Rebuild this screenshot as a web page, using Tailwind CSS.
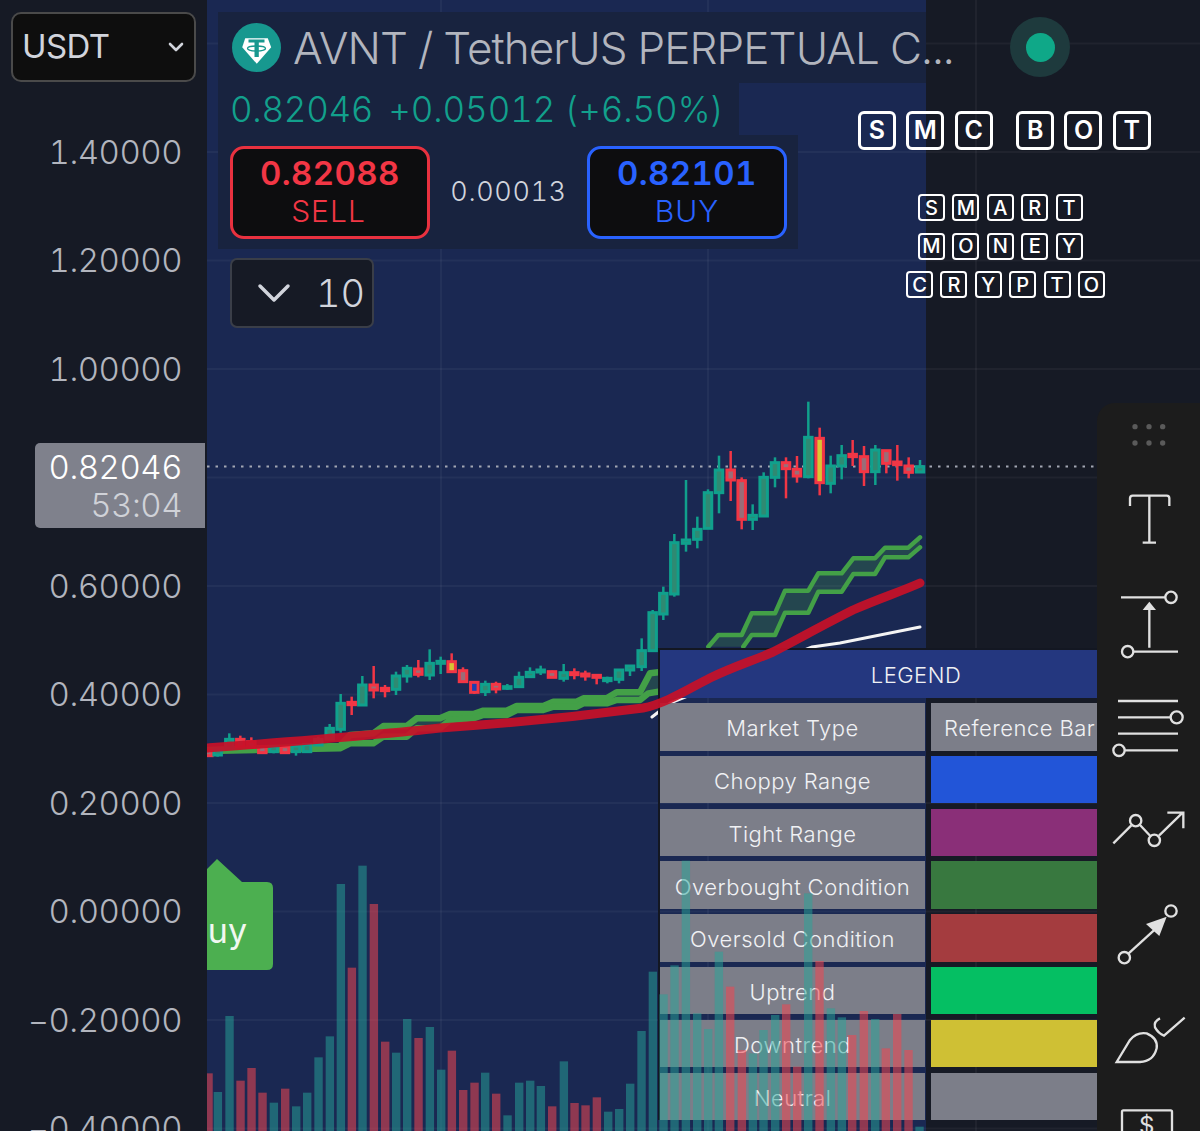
<!DOCTYPE html>
<html lang="en">
<head>
  <meta charset="UTF-8" />
  <title>AVNT / TetherUS Perpetual Chart</title>
  <script src="https://cdn.jsdelivr.net/npm/@tailwindcss/browser@4"></script>
</head>
<body class="bg-[#161a25]">
<div class="relative flex w-[1200px] h-[1131px] overflow-hidden tabular-nums font-['Inter','Liberation_Sans',sans-serif]">

  <!-- Price axis -->
  <aside class="relative z-30 w-[207px] h-full shrink-0 bg-[#161a25] text-[33px] font-light text-[#b2b5be] tracking-[-0.5px]">
    <div class="absolute left-[11px] top-[12px] w-[185px] h-[70px] flex items-center justify-between pl-[9px] pr-[10px] bg-[#0e0e0e] border-2 border-[#4a4a4a] rounded-[10px] text-[#d1d4dc] font-normal">
      <span class="tracking-[-0.6px]">USDT</span>
      <svg width="16" height="10" viewBox="0 0 16 10" fill="none" stroke="#d1d4dc" stroke-width="2.600" stroke-linecap="round" stroke-linejoin="round"><path d="M2 2l6 6 6-6"/></svg>
    </div>
    <div class="pt-[98px] flex flex-col items-end pr-[25px]">
      <div class="h-[108.5px] flex items-center">1.40000</div>
      <div class="h-[108.5px] flex items-center">1.20000</div>
      <div class="h-[108.5px] flex items-center">1.00000</div>
      <div class="h-[108.5px] flex items-center"></div>
      <div class="h-[108.5px] flex items-center">0.60000</div>
      <div class="h-[108.5px] flex items-center">0.40000</div>
      <div class="h-[108.5px] flex items-center">0.20000</div>
      <div class="h-[108.5px] flex items-center">0.00000</div>
      <div class="h-[108.5px] flex items-center">−0.20000</div>
      <div class="h-[108.5px] flex items-center">−0.40000</div>
    </div>
    <div class="absolute left-[35px] top-[443px] w-[170px] h-[85px] flex flex-col items-end justify-center pr-[23px] bg-[#7f818c] rounded-l-[5px] leading-[38px]">
      <span class="text-white">0.82046</span>
      <span class="text-[#d0d2d8]">53:04</span>
    </div>
  </aside>

  <!-- Chart -->
  <main class="relative flex-1 flex">
    <section class="relative w-[719px] h-full bg-[#1a2852]">
      <div class="relative z-[5] mt-[12px] ml-[11px]">
        <div class="w-[708px] h-[71px] bg-[#18233f] flex items-center pl-[14px]">
          <svg width="49" height="49" viewBox="0 0 49 49" class="shrink-0">
            <circle cx="24.500" cy="24.500" r="24.500" fill="#17988f"/>
            <path d="M13.200 15.200H35.800L39.200 24.200L24.800 40.800L10.200 24.200z" fill="#fff"/>
            <path d="M16.500 16.500H32.500V19.500H26.800V34H22.500V19.500H16.500z" fill="#17988f"/>
            <ellipse cx="24.500" cy="25.500" rx="9" ry="2.500" fill="none" stroke="#17988f" stroke-width="1.300"/>
          </svg>
          <h1 class="ml-[12px] text-[44px] font-light tracking-[-0.9px] text-[#b2b5be] whitespace-nowrap">AVNT / TetherUS PERPETUAL C...</h1>
        </div>
        <div class="w-[521px] h-[52px] bg-[#18233f] flex items-center pl-[12px] text-[35px] font-light text-[#12a08c] whitespace-nowrap gap-[15px]">
          <span class="tracking-[-0.3px]">0.82046</span>
          <span class="tracking-[-0.1px]">+0.05012 (+6.50%)</span>
        </div>
        <div class="w-[580px] h-[114px] bg-[#18233f] flex pl-[12px] pt-[11px]">
          <button class="w-[200px] h-[93px] flex flex-col items-center justify-center pb-[3px] bg-[#0d0d0f] border-[3px] border-[#e8313f] rounded-[14px] text-[#f23645]">
            <span class="text-[33px] font-semibold leading-[39px] tracking-[0.4px]">0.82088</span>
            <span class="text-[30px] font-light leading-[36px] tracking-[1px] -ml-[3px]">SELL</span>
          </button>
          <span class="w-[157px] h-[93px] flex items-center justify-center text-[27px] font-light tracking-[0.6px] text-[#d1d4dc]">0.00013</span>
          <button class="w-[200px] h-[93px] flex flex-col items-center justify-center pb-[3px] bg-[#0d0d0f] border-[3px] border-[#2962ff] rounded-[14px] text-[#2962ff]">
            <span class="text-[33px] font-semibold leading-[39px] tracking-[0.4px]">0.82101</span>
            <span class="text-[30px] font-light leading-[36px] tracking-[1px]">BUY</span>
          </button>
        </div>
        <div class="mt-[9px] ml-[12px] w-[144px] h-[70px] flex items-center gap-[25px] pl-[25px] bg-[#161a25] border-2 border-[#3a3e48] rounded-[7px]">
          <svg width="34" height="20" viewBox="0 0 34 20" fill="none" stroke="#d1d4dc" stroke-width="3.500" stroke-linecap="round" stroke-linejoin="round"><path d="M3 3l14 14 14-14"/></svg>
          <span class="text-[38px] font-light text-[#d1d4dc]">10</span>
        </div>
      </div>

      <!-- Buy flag, cut by the axis -->
      <div class="absolute left-0 top-[859px] w-[66px] h-[111px] z-[6] overflow-hidden">
        <svg width="66" height="111" viewBox="0 0 66 111" class="absolute inset-0">
          <path d="M0 10L10 0L35 23H60q6 0 6 6v76q0 6-6 6H0z" fill="#4caf50"/>
        </svg>
        <span class="absolute right-[26px] top-[52px] text-[34px] leading-[40px] text-[#f1f8f1]">Buy</span>
      </div>
    </section>

    <!-- Grid, candles, moving averages under the legend -->
    <svg id="under" class="absolute inset-0 z-[1]" width="993" height="1131" viewBox="207 0 993 1131" fill="none"></svg>

    <!-- Legend -->
    <div class="absolute left-[451px] top-[648px] z-10 w-[514px] border-l-2 border-t-2 border-[#131722] text-[22px] font-light tracking-[0.5px] text-[#f0f1f4]">
      <div class="h-[48px] mb-[5px] pt-[3px] flex items-center justify-center bg-[#24377f]">LEGEND</div>
      <div class="grid grid-cols-[265px_1fr] gap-x-[6px] gap-y-[5.300px] auto-rows-[47.500px]">
        <div class="flex items-center justify-center pt-[4px] bg-[#7c7e89]">Market Type</div>
        <div class="flex items-center pl-[13px] pt-[4px] bg-[#7c7e89] whitespace-nowrap">Reference Bar</div>
        <div class="flex items-center justify-center pt-[4px] bg-[#7c7e89]">Choppy Range</div>
        <div class="bg-[#2255d8]"></div>
        <div class="flex items-center justify-center pt-[4px] bg-[#7c7e89]">Tight Range</div>
        <div class="bg-[#8a2f78]"></div>
        <div class="flex items-center justify-center pt-[4px] bg-[#7c7e89]">Overbought Condition</div>
        <div class="bg-[#38783f]"></div>
        <div class="flex items-center justify-center pt-[4px] bg-[#7c7e89]">Oversold Condition</div>
        <div class="bg-[#a43c3f]"></div>
        <div class="flex items-center justify-center pt-[4px] bg-[#7c7e89]">Uptrend</div>
        <div class="bg-[#05bf63]"></div>
        <div class="flex items-center justify-center pt-[4px] bg-[#7c7e89]">Downtrend</div>
        <div class="bg-[#cfc034]"></div>
        <div class="flex items-center justify-center pt-[4px] bg-[#7c7e89]">Neutral</div>
        <div class="bg-[#7c7e89]"></div>
      </div>
    </div>

    <!-- Red average and volume bars sit over the legend -->
    <svg id="over" class="absolute inset-0 z-20 pointer-events-none" width="993" height="1131" viewBox="207 0 993 1131" fill="none"></svg>

    <!-- Status dot -->
    <div class="absolute left-[803px] top-[17px] z-[5] w-[60px] h-[60px] flex items-center justify-center rounded-full bg-[#1e3a3d]">
      <div class="w-[29px] h-[29px] rounded-full bg-[#0fa888]"></div>
    </div>

    <!-- Boxed captions -->
    <div class="absolute left-[651px] top-[111px] z-[5] flex gap-[10.300px] text-[25px] font-semibold text-white">
      <span class="w-[38px] h-[39px] flex items-center justify-center border-[3px] border-white rounded-[6px]">S</span>
      <span class="w-[38px] h-[39px] flex items-center justify-center border-[3px] border-white rounded-[6px]">M</span>
      <span class="w-[38px] h-[39px] flex items-center justify-center border-[3px] border-white rounded-[6px]">C</span>
      <span class="w-[13px]"></span>
      <span class="w-[38px] h-[39px] flex items-center justify-center border-[3px] border-white rounded-[6px] -ml-[10px]">B</span>
      <span class="w-[38px] h-[39px] flex items-center justify-center border-[3px] border-white rounded-[6px]">O</span>
      <span class="w-[38px] h-[39px] flex items-center justify-center border-[3px] border-white rounded-[6px]">T</span>
    </div>
    <div class="absolute left-[699px] top-[194px] w-[198px] z-[5] flex flex-col items-start gap-[11.500px] text-[20px] font-medium text-white">
      <div class="flex gap-[7.400px] ml-[12px]">
        <span class="w-[27px] h-[27px] flex items-center justify-center border-[2.500px] border-white rounded-[4px]">S</span>
        <span class="w-[27px] h-[27px] flex items-center justify-center border-[2.500px] border-white rounded-[4px]">M</span>
        <span class="w-[27px] h-[27px] flex items-center justify-center border-[2.500px] border-white rounded-[4px]">A</span>
        <span class="w-[27px] h-[27px] flex items-center justify-center border-[2.500px] border-white rounded-[4px]">R</span>
        <span class="w-[27px] h-[27px] flex items-center justify-center border-[2.500px] border-white rounded-[4px]">T</span>
      </div>
      <div class="flex gap-[7.400px] ml-[12px]">
        <span class="w-[27px] h-[27px] flex items-center justify-center border-[2.500px] border-white rounded-[4px]">M</span>
        <span class="w-[27px] h-[27px] flex items-center justify-center border-[2.500px] border-white rounded-[4px]">O</span>
        <span class="w-[27px] h-[27px] flex items-center justify-center border-[2.500px] border-white rounded-[4px]">N</span>
        <span class="w-[27px] h-[27px] flex items-center justify-center border-[2.500px] border-white rounded-[4px]">E</span>
        <span class="w-[27px] h-[27px] flex items-center justify-center border-[2.500px] border-white rounded-[4px]">Y</span>
      </div>
      <div class="flex gap-[7.400px]">
        <span class="w-[27px] h-[27px] flex items-center justify-center border-[2.500px] border-white rounded-[4px]">C</span>
        <span class="w-[27px] h-[27px] flex items-center justify-center border-[2.500px] border-white rounded-[4px]">R</span>
        <span class="w-[27px] h-[27px] flex items-center justify-center border-[2.500px] border-white rounded-[4px]">Y</span>
        <span class="w-[27px] h-[27px] flex items-center justify-center border-[2.500px] border-white rounded-[4px]">P</span>
        <span class="w-[27px] h-[27px] flex items-center justify-center border-[2.500px] border-white rounded-[4px]">T</span>
        <span class="w-[27px] h-[27px] flex items-center justify-center border-[2.500px] border-white rounded-[4px]">O</span>
      </div>
    </div>
  </main>

  <!-- Drawing toolbar -->
  <nav class="absolute right-0 top-[403px] z-30 w-[103px] h-[728px] bg-[#1c1c1c] rounded-tl-[18px] overflow-hidden flex flex-col">
    <svg class="shrink-0" width="103" height="77" viewBox="21 9 309 231" fill="#5a5a5a">
      <circle cx="135" cy="80" r="8"/><circle cx="177" cy="80" r="8"/><circle cx="218" cy="80" r="8"/>
      <circle cx="135" cy="129" r="8"/><circle cx="177" cy="129" r="8"/><circle cx="218" cy="129" r="8"/>
    </svg>
    <svg class="shrink-0" width="103" height="94" viewBox="21 240 309 282" fill="none" stroke="#e0e0e0" stroke-width="7">
      <path d="M120 318V295q0-8 8-8H230q8 0 8 8V318M178 287V428M158 428H198"/>
    </svg>
    <svg class="shrink-0" width="103" height="106" viewBox="21 522 309 318" fill="none" stroke="#e0e0e0" stroke-width="7">
      <path d="M93 592H226M178 743V628M131 755H264"/>
      <circle cx="243" cy="592" r="17"/><circle cx="113" cy="755" r="17"/>
      <path d="M178 605L158 630H198z" fill="#e0e0e0" stroke="none"/>
    </svg>
    <svg class="shrink-0" width="103" height="90" viewBox="21 840 309 270" fill="none" stroke="#e0e0e0" stroke-width="7">
      <path d="M84 903H264M84 952H242M84 1001H264M105 1051H264"/>
      <circle cx="260" cy="952" r="18"/><circle cx="87" cy="1051" r="17"/>
    </svg>
    <svg class="shrink-0" width="103" height="110" viewBox="21 0 309 330" fill="none" stroke="#e0e0e0" stroke-width="7">
      <path d="M70 220L124 166M150 165L181 198M207 197L278 128M232 128H280V175"/>
      <circle cx="137" cy="152" r="17"/><circle cx="193" cy="211" r="17"/>
    </svg>
    <svg class="shrink-0" width="103" height="110" viewBox="21 330 309 330" fill="none" stroke="#e0e0e0" stroke-width="7">
      <path d="M116 550L195 478"/>
      <circle cx="103" cy="563" r="17"/><circle cx="243" cy="423" r="17"/>
      <path d="M230 440L168 462L208 498z" fill="#e0e0e0" stroke="none"/>
    </svg>
    <svg class="shrink-0" width="103" height="100" viewBox="21 660 309 300" fill="none" stroke="#e0e0e0" stroke-width="7">
      <path d="M80 876L120 810Q140 785 170 790Q205 805 200 835Q190 875 150 876Z"/>
      <path d="M210 745Q190 755 195 772Q205 790 222 797L284 743"/>
    </svg>
    <svg class="shrink-0" width="103" height="41" viewBox="21 960 309 123" fill="none" stroke="#e0e0e0" stroke-width="7">
      <rect x="96" y="1021" width="150" height="120" rx="4"/>
      <text x="170" y="1092" text-anchor="middle" fill="#e0e0e0" stroke="none" font-size="72" font-family="Inter">$</text>
    </svg>
  </nav>
</div>

<script>
  const NS = 'http://www.w3.org/2000/svg';
  const under = document.getElementById('under');
  const over = document.getElementById('over');

  function add(parent, tag, attrs) {
    const el = document.createElementNS(NS, tag);
    for (const k in attrs) el.setAttribute(k, attrs[k]);
    parent.appendChild(el);
  }

  // grid lines
  for (let i = 0; i < 11; i++) {
    const y = 43.5 + i * 108.5;
    add(under, 'path', { d: `M207 ${y}H1200`, stroke: 'rgba(255,255,255,.045)', 'stroke-width': 2 });
  }
  [441, 708, 976].forEach(x => add(under, 'path', { d: `M${x} 0V1131`, stroke: 'rgba(255,255,255,.045)', 'stroke-width': 2 }));

  // last price line
  add(under, 'path', { d: 'M207 466.500H1100', stroke: '#a3a7b4', 'stroke-width': 2, 'stroke-dasharray': '2.500 6' });

  // x, wick top, wick bottom, body top, body bottom, colour, centre colour (zoomed units of the two chart crops)
  const left = [
    [25,330,350,332,347,'r'],[53,325,350,327,345,'t'],[88,280,325,298,325,'t'],[121,287,320,298,320,'r'],
    [154,292,325,305,322,'r'],[187,318,340,320,338,'r'],[221,318,340,320,335,'t'],[255,318,340,320,338,'r'],
    [288,315,347,318,335,'t'],[321,310,338,313,335,'t'],[355,290,318,298,315,'t'],[389,252,298,265,297,'t'],
    [422,162,278,190,268,'t'],[455,170,225,187,194,'r'],[487,108,196,135,195,'t'],[521,78,175,135,150,'r'],
    [555,135,172,145,152,'r'],[588,95,165,108,148,'t'],[621,75,128,85,108,'t'],[655,60,112,87,103,'r'],
    [689,28,120,70,105,'t'],[722,50,102,64,70,'t'],[755,40,98,65,95,'r','#d9c434'],[789,82,128,92,125,'r'],
    [823,125,162,127,157,'r','#1d3fb0'],[856,122,168,133,155,'t'],[888,125,160,133,147,'r'],[922,132,150,140,145,'t'],
    [957,95,142,112,140,'t'],[990,82,112,97,110,'t'],[1022,77,105,90,96,'t'],[1056,92,113,95,112,'r'],
    [1091,72,125,98,115,'t'],[1123,85,118,98,104,'r'],[1156,92,122,102,108,'r'],[1190,103,133,106,112,'r'],
    [1222,110,130,115,122,'t'],[1257,88,130,90,118,'t'],[1290,75,108,78,90,'t']
  ].map(c => [200 + c[0] / 3, 640 + c[1] / 3, 640 + c[2] / 3, 640 + c[3] / 3, 640 + c[4] / 3, c[5], c[6]]);

  const right = [
    [5,745,843,782,830,'t'],[38,660,782,668,782,'t'],[70,590,690,610,672,'t'],[103,432,620,458,612,'t'],
    [138,270,485,450,460,'t'],[172,380,475,418,448,'t'],[204,298,415,308,415,'t'],[237,197,370,240,308,'t'],
    [272,183,333,240,270,'r'],[305,262,418,272,388,'r'],[338,343,420,376,388,'t'],[371,247,380,262,378,'t'],
    [405,202,292,218,262,'t'],[438,202,325,218,236,'r'],[471,198,278,238,258,'r'],[505,35,265,142,260,'t'],
    [539,113,316,145,278,'r','#d9c434'],[572,197,310,228,280,'t'],[605,165,268,197,228,'t'],[638,150,228,193,200,'r'],
    [672,168,288,200,245,'r'],[706,165,285,180,245,'t'],[739,180,250,182,220,'r'],[772,165,272,216,224,'r'],
    [806,202,265,228,247,'r'],[840,210,246,230,246,'t']
  ].map(c => [640 + c[0] / 3, 390 + c[1] / 3, 390 + c[2] / 3, 390 + c[3] / 3, 390 + c[4] / 3, c[5], c[6]]);

  // stepped green band
  const scale = (pts, ox, oy) => pts.map(p => `${ox + p[0] / 3} ${oy + p[1] / 3}`);
  const upperA = [[22,330],[420,318],[450,285],[520,280],[550,258],[620,258],[650,235],[720,235],[750,222],[820,222],[850,212],[920,212],[950,198],[1030,198],[1060,185],[1130,185],[1150,175],[1220,175],[1250,157],[1320,157],[1350,100],[1375,97]];
  const lowerA = [[22,333],[420,325],[450,310],[520,310],[550,290],[620,290],[650,265],[720,265],[750,240],[820,235],[850,225],[920,225],[950,210],[1030,210],[1060,200],[1130,200],[1150,190],[1220,190],[1250,180],[1320,180],[1345,160],[1375,155]];
  const upperB = [[205,770],[235,735],[305,735],[335,670],[405,670],[435,602],[505,602],[535,550],[605,550],[640,505],[705,505],[735,473],[805,473],[840,442]];
  const lowerB = [[310,770],[335,735],[405,735],[435,668],[505,668],[535,605],[605,605],[640,552],[705,552],[735,502],[805,502],[840,472]];
  [[upperA, lowerA, 200, 640, 6.500], [upperB, lowerB, 640, 390, 4.500]].forEach(([u, l, ox, oy, w]) => {
    const up = scale(u, ox, oy), lo = scale(l, ox, oy);
    add(under, 'path', { d: 'M' + up.concat(lo.slice().reverse()).join('L') + 'Z', fill: 'rgba(67,160,71,.25)' });
    add(under, 'path', { d: 'M' + up.join('L'), stroke: '#43a047', 'stroke-width': w, 'stroke-linejoin': 'round', 'stroke-linecap': 'round' });
    add(under, 'path', { d: 'M' + lo.join('L'), stroke: '#43a047', 'stroke-width': w, 'stroke-linejoin': 'round', 'stroke-linecap': 'round' });
  });

  // white average, mostly hidden by the legend
  add(under, 'path', { d: 'M652 717L670 703L812 647L840 643L920 627', stroke: '#f4f4f4', 'stroke-width': 3, 'stroke-linecap': 'round' });

  // candles
  left.concat(right).forEach(([x, wt, wb, bt, bb, col, mid]) => {
    const c = col === 'r' ? '#f23645' : '#10a08c';
    const fill = mid || (col === 'r' ? '#9a6d78' : '#2f8a72');
    add(under, 'path', { d: `M${x} ${wt}V${wb}`, stroke: c, 'stroke-width': 2.500 });
    add(under, 'rect', { x: x - 3.750, y: bt, width: 7.500, height: Math.max(bb - bt, 1), fill, stroke: c, 'stroke-width': 3 });
  });

  // red average, over the legend header
  add(over, 'path', {
    d: 'M207 748C300 741 380 735 440 728C500 724 567 718 643 708C665 704 690 688 710 678C735 666 750 662 773 652C800 638 825 624 853 610C880 598 900 592 920 583',
    stroke: 'rgba(200,16,40,.92)', 'stroke-width': 9, 'stroke-linecap': 'round'
  });

  // volume: x, top (zoomed units), bar colour
  const vols = [
    [25,670,'r'],[53,726,'t'],[88,498,'t'],[121,692,'r'],[154,654,'r'],[187,728,'r'],[221,758,'t'],[255,716,'r'],
    [288,769,'t'],[321,728,'t'],[355,622,'t'],[389,559,'t'],[422,102,'t'],[455,353,'r'],[487,47,'t'],[521,162,'r'],
    [555,575,'r'],[588,608,'t'],[621,507,'t'],[655,564,'r'],[689,531,'t'],[723,659,'t'],[755,602,'r'],[789,720,'r'],
    [823,698,'r'],[855,668,'t'],[888,731,'r'],[922,796,'t'],[957,698,'t'],[990,692,'t'],[1022,708,'t'],[1056,769,'r'],
    [1091,634,'t'],[1123,759,'r'],[1156,766,'r'],[1190,742,'r'],[1224,785,'t'],[1257,777,'t'],[1290,701,'t'],[1324,543,'t'],[1358,365,'t']
  ].map(v => [200 + v[0] / 3, 850 + v[1] / 3, v[2]]).concat([
    [40,433,'t'],[73,346,'t'],[107,32,'t'],[141,490,'t'],[174,537,'t'],[206,305,'t'],[240,410,'r'],[275,600,'r'],
    [308,610,'t'],[340,540,'t'],[375,495,'t'],[408,463,'r'],[441,650,'r'],[474,130,'t'],[508,333,'r'],[542,475,'t'],
    [575,502,'t'],[606,555,'r'],[641,483,'r'],[675,507,'t'],[707,595,'r'],[741,492,'r'],[775,600,'r'],[808,830,'t']
  ].map(v => [650 + v[0] / 3, 850 + v[1] / 3, v[2]]));
  vols.forEach(([x, top, col]) => {
    add(over, 'rect', { x: x - 4, y: top, width: 8.400, height: 1131 - top, fill: col === 'r' ? 'rgba(240,70,80,.55)' : 'rgba(38,166,154,.5)' });
  });
</script>
</body>
</html>
